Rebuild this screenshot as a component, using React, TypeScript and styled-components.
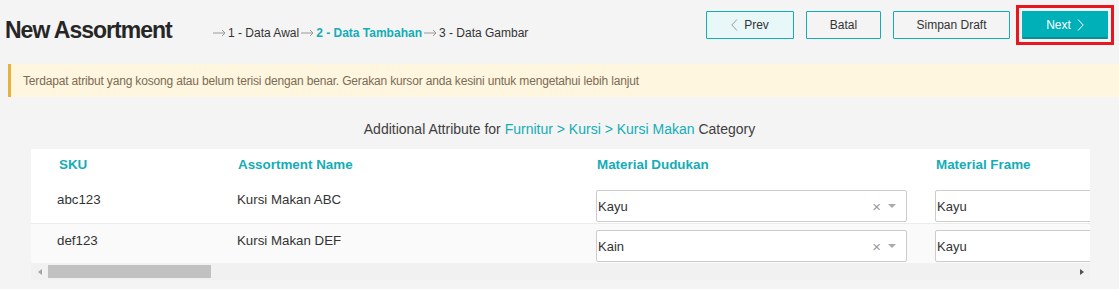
import { FC } from 'react';
import styled, { createGlobalStyle } from 'styled-components';

const TEAL = '#13adb6';

const GlobalStyle = createGlobalStyle`
  html, body {
    margin: 0;
    padding: 0;
    background: #f4f4f4;
    font-family: "Liberation Sans", Arial, sans-serif;
    color: #333333;
  }
`;

const ROWS = [
  { sku: 'abc123', name: 'Kursi Makan ABC', dudukan: 'Kayu', frame: 'Kayu' },
  { sku: 'def123', name: 'Kursi Makan DEF', dudukan: 'Kain', frame: 'Kayu' },
];

const StepArrow: FC = () => (
  <svg width="13" height="8" viewBox="0 0 13 8" style={{ margin: '0 2px 0 0' }}>
    <path d="M0 4h12M9 1l3 3-3 3" fill="none" stroke="#9a9a9a" strokeWidth="1" />
  </svg>
);

const Chevron: FC<{ dir: 'left' | 'right'; color: string }> = ({ dir, color }) => (
  <svg width="7" height="12" viewBox="0 0 7 12">
    <path
      d={dir === 'left' ? 'M6 0.5L0.8 6 6 11.5' : 'M1 0.5L6.2 6 1 11.5'}
      fill="none"
      stroke={color}
      strokeWidth="1"
    />
  </svg>
);

export default function App() {
  return (
    <Page>
      <GlobalStyle />
      <Header>
        <Title>New Assortment</Title>
        <Steps>
          <StepArrow />
          <Step>1 - Data Awal</Step>
          <StepArrow />
          <Step $active>2 - Data Tambahan</Step>
          <StepArrow />
          <Step>3 - Data Gambar</Step>
        </Steps>
        <Actions>
          <Button $variant="light" $w={88}>
            <Chevron dir="left" color="#9a9a9a" />
            Prev
          </Button>
          <Button $w={75}>Batal</Button>
          <Button $w={117}>Simpan Draft</Button>
          <Highlight>
            <Button $variant="primary" $w={86}>
              Next
              <Chevron dir="right" color="#ffffff" />
            </Button>
          </Highlight>
        </Actions>
      </Header>

      <Alert>
        Terdapat atribut yang kosong atau belum terisi dengan benar. Gerakan kursor anda kesini untuk
        mengetahui lebih lanjut
      </Alert>

      <CategoryTitle>
        Additional Attribute for <em>Furnitur &gt; Kursi &gt; Kursi Makan</em> Category
      </CategoryTitle>

      <TableWrap>
        <Viewport>
          <Grid>
            <HeadCell $pad={28}>SKU</HeadCell>
            <HeadCell>Assortment Name</HeadCell>
            <HeadCell>Material Dudukan</HeadCell>
            <HeadCell>Material Frame</HeadCell>
            {ROWS.map((r, i) => (
              <Row key={r.sku} $striped={i % 2 === 1}>
                <TextCell $pad={26}>{r.sku}</TextCell>
                <TextCell>{r.name}</TextCell>
                <SelectCell>
                  <Select $w={311}>
                    <SelectValue>{r.dudukan}</SelectValue>
                    <ClearIcon>×</ClearIcon>
                    <Caret />
                  </Select>
                </SelectCell>
                <SelectCell>
                  <Select $w={311}>
                    <SelectValue>{r.frame}</SelectValue>
                  </Select>
                </SelectCell>
              </Row>
            ))}
          </Grid>
        </Viewport>
        <Scrollbar>
          <ScrollArrow $dir="left" />
          <Track>
            <Thumb style={{ width: 163 }} />
          </Track>
          <ScrollArrow $dir="right" />
        </Scrollbar>
      </TableWrap>
    </Page>
  );
}

const Page = styled.div`
  width: 1119px;
  height: 289px;
  overflow: hidden;
`;

const Header = styled.div`
  display: flex;
  align-items: flex-start;
  padding: 11px 0 0 5px;
  height: 53px;
  box-sizing: border-box;
`;

const Title = styled.h1`
  margin: 6px 0 0;
  font-size: 23px;
  line-height: 26px;
  font-weight: 700;
  letter-spacing: -1px;
  color: #262626;
  width: 208px;
  white-space: nowrap;
`;

const Steps = styled.div`
  display: flex;
  align-items: center;
  margin-top: 15px;
  font-size: 12px;
  line-height: 14px;
  white-space: nowrap;
`;

const Step = styled.span<{ $active?: boolean }>`
  color: ${(p) => (p.$active ? TEAL : '#333333')};
  font-weight: ${(p) => (p.$active ? 700 : 400)};
  margin-right: 2px;
`;

const Actions = styled.div`
  margin-left: auto;
  display: flex;
  gap: 12px;
  padding-right: 11px;
`;

const Button = styled.button<{ $variant?: 'light' | 'primary'; $w: number }>`
  display: flex;
  align-items: center;
  justify-content: center;
  gap: 6px;
  width: ${(p) => p.$w}px;
  height: 28px;
  box-sizing: border-box;
  border: 1px solid ${TEAL};
  border-radius: 1px;
  font-family: inherit;
  font-size: 12px;
  color: #333333;
  background: ${(p) => (p.$variant === 'light' ? '#e8f8f8' : 'transparent')};
  padding: 0;
  cursor: pointer;

  ${(p) =>
    p.$variant === 'primary' &&
    `
    background: #00b0b8;
    border-color: #00b0b8;
    border-bottom: 2px solid #0a8d93;
    color: #ffffff;
    padding-top: 1px;
  `}
`;

const Highlight = styled.div`
  outline: 3px solid #e8161f;
  outline-offset: 3px;
  display: flex;
`;

const Alert = styled.div`
  margin: 11px 0 0 8px;
  height: 33px;
  display: flex;
  align-items: center;
  padding-left: 12px;
  border-left: 3px solid #e9b23d;
  background: #fff6df;
  font-size: 12px;
  letter-spacing: -0.17px;
  color: #7c6b55;
  white-space: nowrap;
`;

const CategoryTitle = styled.div`
  margin-top: 24px;
  text-align: center;
  font-size: 14px;
  line-height: 17px;
  color: #404040;

  em {
    font-style: normal;
    color: ${TEAL};
  }
`;

const TableWrap = styled.div`
  margin: 11px 0 0 31px;
  width: 1059px;
  background: #ffffff;
`;

const Viewport = styled.div`
  overflow: hidden;
`;

const Grid = styled.div`
  display: grid;
  grid-template-columns: 206px 359px 339px 339px;
  width: max-content;
`;

const HeadCell = styled.div<{ $pad?: number }>`
  height: 33px;
  box-sizing: border-box;
  padding: 8px 0 0 ${(p) => p.$pad ?? 1}px;
  font-size: 13.4px;
  line-height: 16px;
  font-weight: 700;
  color: ${TEAL};
`;

const TextCell = styled.div<{ $pad?: number }>`
  box-sizing: border-box;
  padding-left: ${(p) => p.$pad ?? 0}px;
  font-size: 13.3px;
  line-height: 18px;
  color: #333333;
`;

const SelectCell = styled.div`
  box-sizing: border-box;
`;

const Row = styled.div<{ $striped: boolean }>`
  display: contents;

  & > * {
    background: ${(p) => (p.$striped ? '#fafafa' : '#ffffff')};
    border-top: ${(p) => (p.$striped ? '1px solid #ececec' : 'none')};
    height: ${(p) => (p.$striped ? 40 : 41)}px;
  }

  & > ${TextCell} {
    padding-top: ${(p) => (p.$striped ? 8 : 9)}px;
  }

  & > ${SelectCell} {
    padding-top: ${(p) => (p.$striped ? 6 : 8)}px;
  }
`;

const Select = styled.div<{ $w: number }>`
  width: ${(p) => p.$w}px;
  height: 32px;
  box-sizing: border-box;
  border: 1px solid #cccccc;
  border-radius: 2px;
  background: #ffffff;
  display: flex;
  align-items: center;
  padding: 1px 10px 0 1px;
`;

const SelectValue = styled.span`
  flex: 1;
  font-size: 13px;
  color: #333333;
`;

const ClearIcon = styled.span`
  font-size: 15px;
  color: #999999;
  margin-right: 7px;
  line-height: 1;
`;

const Caret = styled.span`
  width: 0;
  height: 0;
  border-left: 4.5px solid transparent;
  border-right: 4.5px solid transparent;
  border-top: 4.5px solid #aaaaaa;
  margin-top: -2px;
`;

const Scrollbar = styled.div`
  display: flex;
  align-items: center;
  height: 17px;
  background: #f1f1f1;
`;

const ScrollArrow = styled.span<{ $dir: 'left' | 'right' }>`
  width: 17px;
  height: 17px;
  display: flex;
  align-items: center;
  justify-content: center;

  &::before {
    content: '';
    border-top: 3.5px solid transparent;
    border-bottom: 3.5px solid transparent;
    ${(p) =>
      p.$dir === 'left' ? 'border-right: 4px solid #a3a3a3;' : 'border-left: 4px solid #505050;'}
  }
`;

const Track = styled.div`
  flex: 1;
  height: 13px;
`;

const Thumb = styled.div`
  height: 13px;
  background: #c1c1c1;
`;
